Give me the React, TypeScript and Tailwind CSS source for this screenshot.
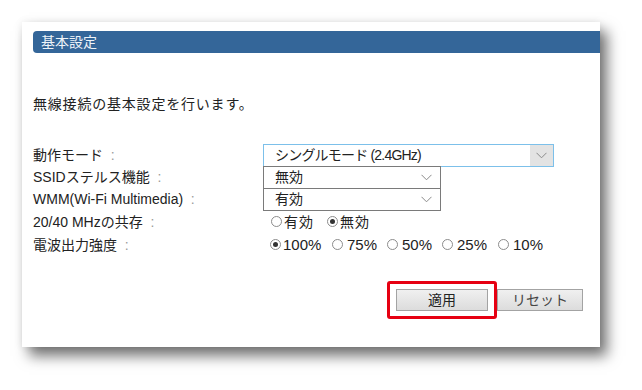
import React from 'react'

const font = { fontFamily: '"Liberation Sans", "Noto Sans CJK JP", sans-serif' }

function Chevron() {
  return (
    <svg width="11" height="7" viewBox="0 0 11 7" className="block">
      <polyline points="0.5,0.8 5.5,5.8 10.5,0.8" fill="none" stroke="#8a8a8a" strokeWidth="1" />
    </svg>
  )
}

function Radio({ checked }: { checked?: boolean }) {
  return (
    <span className="flex h-[11px] w-[11px] shrink-0 items-center justify-center rounded-full border border-[#8c8c8c] bg-white">
      {checked && <span className="h-[5px] w-[5px] rounded-full bg-[#333]" />}
    </span>
  )
}

function Label({ text }: { text: string }) {
  return (
    <div className="w-[230px] shrink-0 text-[#222]">
      {text}
      <span className="text-[#9a9a9a]"> &nbsp;:</span>
    </div>
  )
}

const powers = [
  { v: '100%', w: 'w-[62px]', on: true },
  { v: '75%', w: 'w-[55px]' },
  { v: '50%', w: 'w-[55px]' },
  { v: '25%', w: 'w-[56px]' },
  { v: '10%', w: 'w-[50px]' },
]

export default function App() {
  return (
    <div className="h-[390px] w-[642px] bg-white pl-[22px] pt-[22px]" style={font}>
      <div className="flex h-[325px] w-[578px] flex-col bg-white pl-[11px] pt-[9px] text-[14px] leading-[18px] shadow-[7px_9px_13px_rgba(0,0,0,0.55),0_0_8px_rgba(0,0,0,0.08)]">
        <div className="flex h-[22px] items-center rounded-l-[4px] bg-[#346699] pl-[8px] text-[14px] text-[#eef3f8]">
          基本設定
        </div>

        <div className="mt-[42px] tracking-[0.8px] text-[#222]">無線接続の基本設定を行います。</div>

        <div className="mt-[31px] flex flex-col">
          <div className="flex h-[22px] items-center">
            <Label text="動作モード" />
            <div className="flex h-[23px] w-[291px] items-center border border-[#7cc0ea] pl-[11px] text-[#222]">
              <span className="flex-1 tracking-[-0.8px]">シングルモード (2.4GHz)</span>
              <span className="flex h-full w-[23px] items-center justify-center bg-[#e3e3e3]">
                <Chevron />
              </span>
            </div>
          </div>
          <div className="flex h-[22px] items-center">
            <Label text="SSIDステルス機能" />
            <div className="flex h-[23px] w-[178px] items-center border border-[#7a7a7a] pl-[11px] pr-[8px] text-[#222]">
              <span className="flex-1">無効</span>
              <Chevron />
            </div>
          </div>
          <div className="flex h-[22px] items-center">
            <Label text="WMM(Wi-Fi Multimedia)" />
            <div className="flex h-[23px] w-[178px] items-center border border-[#7a7a7a] pl-[11px] pr-[8px] text-[#222]">
              <span className="flex-1">有効</span>
              <Chevron />
            </div>
          </div>
          <div className="flex h-[23px] items-center">
            <Label text="20/40 MHzの共存" />
            <div className="flex items-center pl-[8px] text-[#222]">
              <Radio />
              <span className="ml-[2px] tracking-[1px]">有効</span>
              <span className="ml-[13px]">
                <Radio checked />
              </span>
              <span className="ml-[2px] tracking-[1px]">無効</span>
            </div>
          </div>
          <div className="flex h-[23px] items-center">
            <Label text="電波出力強度" />
            <div className="flex items-center pl-[7px] text-[15px] text-[#222]">
              {powers.map((p) => (
                <span key={p.v} className={`flex items-center ${p.w}`}>
                  <Radio checked={p.on} />
                  <span className={p.on ? 'ml-[2px]' : 'ml-[4px]'}>{p.v}</span>
                </span>
              ))}
            </div>
          </div>
        </div>

        <div className="mt-[33px] flex justify-end gap-[9px] pr-[17px]">
          <div className="relative">
            <button className="h-[22px] w-[92px] border border-[#a3a3a3] bg-gradient-to-b from-[#f0f0f0] to-[#dcdcdc] text-[14px] text-[#222]">
              適用
            </button>
            <span className="pointer-events-none absolute -bottom-[8px] -left-[9px] -right-[9px] -top-[8px] rounded-[3px] border-[3px] border-[#e60012]" />
          </div>
          <button className="h-[22px] w-[86px] border border-[#a3a3a3] bg-gradient-to-b from-[#f0f0f0] to-[#dcdcdc] text-[14px] text-[#444]">
            リセット
          </button>
        </div>
      </div>
    </div>
  )
}
